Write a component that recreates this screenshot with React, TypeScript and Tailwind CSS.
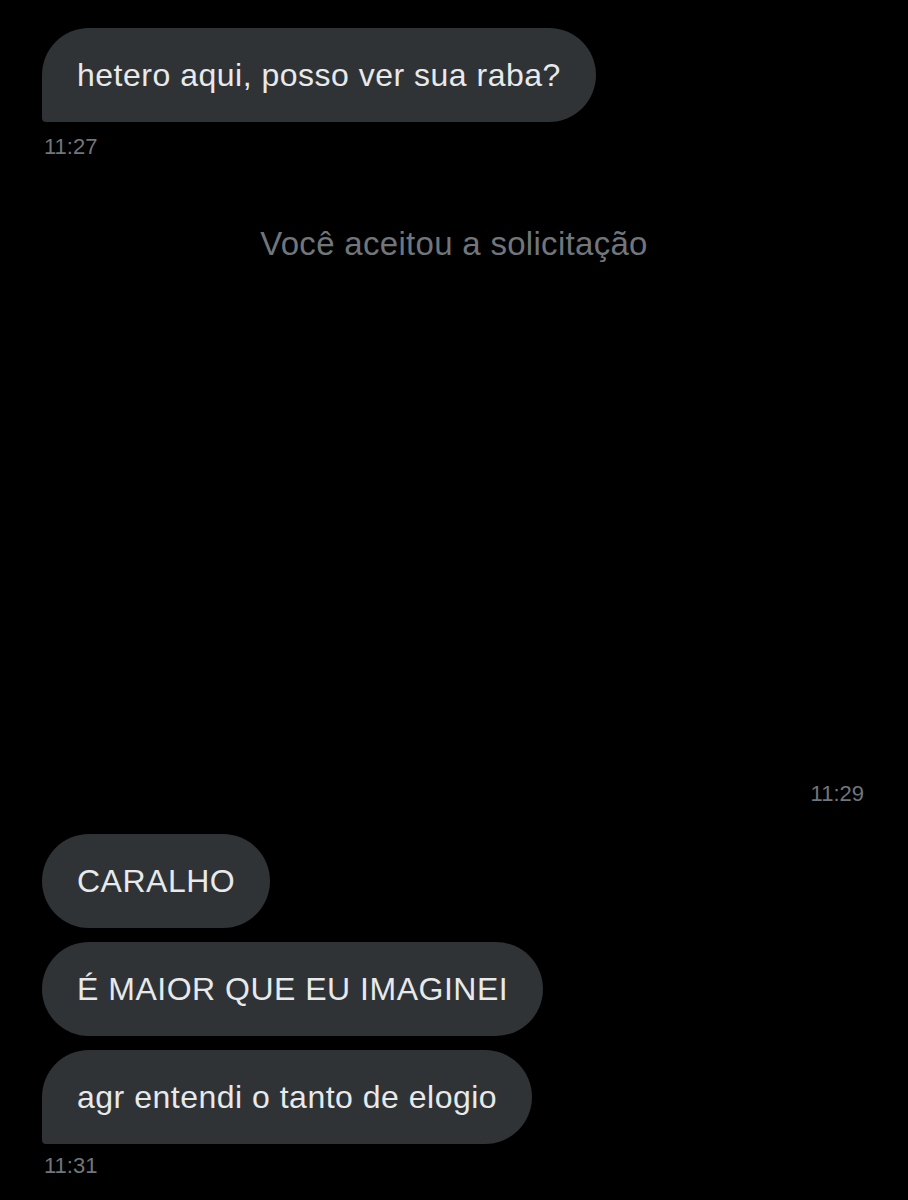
const font = { fontFamily: '"Liberation Sans", Arial, sans-serif' };

type BubbleProps = { text: string; tail?: boolean };

const Bubble = ({ text, tail }: BubbleProps) => (
  <div
    className={`flex h-[94px] w-fit items-center rounded-[47px] bg-[#2f3336] px-[35px] text-[32px] tracking-[0.5px] text-[#e7e9ea] ${
      tail ? 'rounded-bl-[4px]' : ''
    }`}
  >
    {text}
  </div>
);

const Time = ({ value, right }: { value: string; right?: boolean }) => (
  <p className={`text-[22px] leading-[26px] text-[#71767b] ${right ? 'text-right' : ''}`}>{value}</p>
);

export default function App() {
  return (
    <div className="min-h-[1200px] w-[908px] bg-black px-[42px] pt-[28px]" style={font}>
      <Bubble text="hetero aqui, posso ver sua raba?" tail />
      <div className="mt-[12px] pl-[2px]">
        <Time value="11:27" />
      </div>
      <p className="mt-[66px] text-center text-[33px] leading-[36px] tracking-[0.3px] text-[#71767b]">
        Você aceitou a solicitação
      </p>
      <div className="mt-[519px] pr-[2px]">
        <Time value="11:29" right />
      </div>
      <div className="mt-[27px] flex flex-col gap-[14px]">
        <Bubble text="CARALHO" />
        <Bubble text="É MAIOR QUE EU IMAGINEI" />
        <Bubble text="agr entendi o tanto de elogio" tail />
      </div>
      <div className="mt-[9px] pl-[2px]">
        <Time value="11:31" />
      </div>
    </div>
  );
}
